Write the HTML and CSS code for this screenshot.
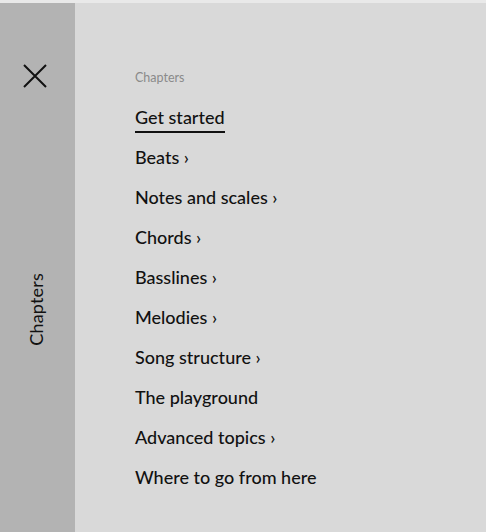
FILE: index.html
```html
<!DOCTYPE html>
<html>
<head>
<meta charset="utf-8">
<link rel="stylesheet" href="styles.css">
</head>
<body>
<div class="page">
  <aside class="sidebar">
    <button class="close" aria-label="Close">
      <svg width="24" height="24" viewBox="0 0 24 24"><path d="M1 1 L23 23 M23 1 L1 23" stroke="#111" stroke-width="2" fill="none"/></svg>
    </button>
    <div class="side-label">Chapters</div>
  </aside>
  <main class="menu">
    <div class="menu-title">Chapters</div>
    <ul class="items">
      <li><a class="active">Get started</a></li>
      <li><a>Beats ›</a></li>
      <li><a>Notes and scales ›</a></li>
      <li><a>Chords ›</a></li>
      <li><a>Basslines ›</a></li>
      <li><a>Melodies ›</a></li>
      <li><a>Song structure ›</a></li>
      <li><a>The playground</a></li>
      <li><a>Advanced topics ›</a></li>
      <li><a>Where to go from here</a></li>
    </ul>
  </main>
</div>
</body>
</html>
```
FILE: styles.css
```css
html, body { margin: 0; padding: 0; }
body {
  background: #e9e9e9;
  font-family: Lato, "Noto Sans", sans-serif;
  color: #111;
}
.page {
  margin-top: 3px;
  height: 529px;
  display: flex;
}
.sidebar {
  width: 75px;
  background: #b3b3b3;
  display: flex;
  flex-direction: column;
  align-items: center;
}
.close {
  margin-top: 61px;
  margin-left: -6px;
  padding: 0;
  border: 0;
  background: none;
  width: 24px;
  height: 24px;
  display: block;
}
.close svg { display: block; }
.side-label {
  margin-top: 185px;
  margin-left: -3px;
  writing-mode: vertical-rl;
  transform: rotate(180deg);
  font-size: 18px;
  letter-spacing: 0.2px;
  line-height: 20px;
}
.menu {
  flex: 1;
  background: #d9d9d9;
  padding-left: 60px;
  padding-top: 67px;
}
.menu-title {
  font-size: 12.5px;
  color: #8a8a8a;
  line-height: 16px;
}
.items {
  list-style: none;
  margin: 19px 0 0;
  padding: 0;
  display: flex;
  flex-direction: column;
  gap: 16px;
}
.items li { display: block; height: 24px; line-height: 24px; font-size: 18px; font-weight: 500; }
.items a { display: inline-block; color: #111; vertical-align: top; }
.items a.active {
  border-bottom: 2px solid #111;
  line-height: 24px;
  padding-bottom: 2px;
}
```
